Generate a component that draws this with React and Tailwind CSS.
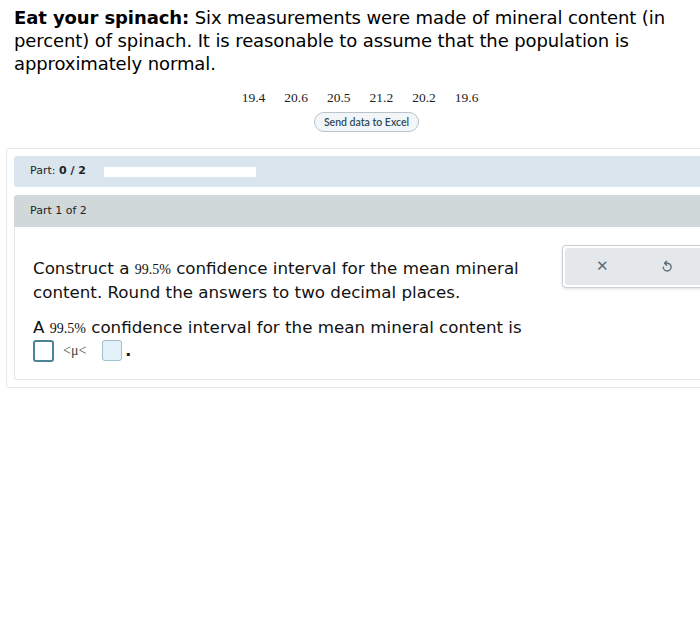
import React from "react";

const sans = { fontFamily: '"DejaVu Sans", Verdana, sans-serif' };

function UndoIcon() {
  return (
    <svg width="12" height="13" viewBox="0 0 12 13" fill="none" stroke="#5b6b78" strokeWidth="1.4" strokeLinecap="round" strokeLinejoin="round">
      <path d="M4.2 3.2 H6.2 A3.9 3.9 0 1 1 2.3 7.1" />
      <path d="M5.6 1.2 L3.6 3.2 L5.6 5.2" />
    </svg>
  );
}

export default function App() {
  const data = ["19.4", "20.6", "20.5", "21.2", "20.2", "19.6"];

  return (
    <div className="w-[700px] h-[624px] bg-white overflow-hidden" style={sans}>
      <p className="pl-[14px] pt-[6px] pr-2 text-[18px] tracking-[-0.1px] leading-[23px] text-black">
        <span className="font-bold">Eat your spinach:</span> Six measurements were made of mineral content (in percent) of spinach. It is reasonable to assume that the population is approximately normal.
      </p>

      <div className="flex justify-center gap-[19px] mt-[15px] pl-[20px] font-['Liberation_Serif'] text-[13.5px] leading-[16px] text-[#222]">
        {data.map((d) => (
          <span key={d}>{d}</span>
        ))}
      </div>

      <div className="flex justify-center mt-[6px] pl-[33px]">
        <button className="h-[20px] px-[9px] rounded-full border border-[#b9c3c9] bg-[#f3f6f8] text-[10.5px] font-semibold text-[#2f4b5a] font-['Lato'] leading-none">
          Send data to Excel
        </button>
      </div>

      <div className="mt-[16px] ml-[6px] w-[720px] border border-[#e6e8ea] rounded-[4px] pt-[7px] pl-[7px] pb-[7px]">
        <div className="h-[31px] bg-[#dae5ee] rounded-l-[3px] flex items-center pl-[16px] text-[11px] text-[#222]">
          <span>
            Part: <span className="font-bold">0 / 2</span>
          </span>
          <div className="ml-[18px] w-[152px] h-[10px] bg-white"></div>
        </div>

        <div className="mt-[8px] h-[32px] bg-[#d0d8da] rounded-tl-[3px] flex items-center pl-[16px] text-[11px] text-[#222]">
          Part 1 of 2
        </div>

        <div className="border border-[#e2e6e8] border-t-0 rounded-bl-[3px] h-[153px] flex pl-[18px] pt-[30px]">
          <div className="w-[510px] text-[16.7px] leading-[23px] text-[#111]">
            <p>
              Construct a <span className="font-['Liberation_Serif'] text-[14px]">99.5%</span> confidence interval for the mean mineral content. Round the answers to two decimal places.
            </p>
            <p className="mt-[12px]">
              A <span className="font-['Liberation_Serif'] text-[14px]">99.5%</span> confidence interval for the mean mineral content is
            </p>
            <div className="flex items-center mt-[-1px]">
              <div className="w-[21px] h-[22px] border-2 border-[#4b8494] rounded-[3px] bg-white"></div>
              <span className="ml-[9px] font-['Liberation_Serif'] text-[14px] text-[#444]">&lt;μ&lt;</span>
              <div className="ml-[16px] w-[20px] h-[21px] border border-[#9fbfcc] rounded-[3px] bg-[#e3f1f9]"></div>
              <span className="ml-[3px] text-[16px] font-bold">.</span>
            </div>
          </div>

          <div className="ml-[19px] mt-[-12px] w-[160px] h-[43px] rounded-[4px] border border-[#c9d0d5] bg-white p-[2px] shadow-[0_1px_3px_rgba(0,0,0,0.12)]">
            <div className="h-full rounded-[3px] bg-[#e4e8eb] flex items-center pl-[31px]">
              <span className="text-[#5b6b78] text-[15px] leading-none">✕</span>
              <span className="ml-[52px] flex">
                <UndoIcon />
              </span>
            </div>
          </div>
        </div>
      </div>
    </div>
  );
}
